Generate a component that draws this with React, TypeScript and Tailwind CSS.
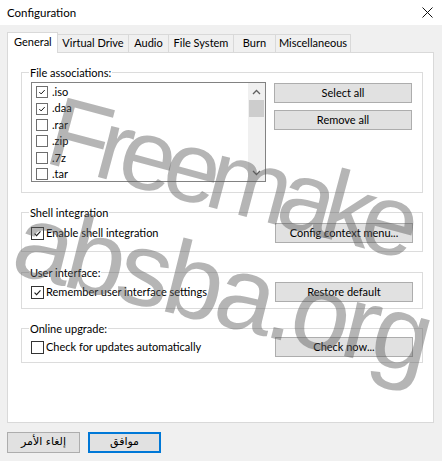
import { ReactNode } from "react";

const extensions = [
  { name: ".iso", checked: true },
  { name: ".daa", checked: true },
  { name: ".rar", checked: false },
  { name: ".zip", checked: false },
  { name: ".7z", checked: false },
  { name: ".tar", checked: false },
];

const tabs = [
  { name: "Virtual Drive", width: "w-[71px]" },
  { name: "Audio", width: "w-[40px]" },
  { name: "File System", width: "w-[65px]" },
  { name: "Burn", width: "w-[42px]" },
  { name: "Miscellaneous", width: "w-[75px]" },
];

function Check({ size }: { size: number }) {
  return (
    <svg width={size} height={size} viewBox="0 0 13 13" className="block">
      <path d="M3 6.6 L5.4 9 L10 4" fill="none" stroke="#1a1a1a" strokeWidth="1.3" />
    </svg>
  );
}

function ListCheckbox({ checked }: { checked: boolean }) {
  return (
    <span className="flex h-[12px] w-[12px] items-center justify-center border border-[#6e6e6e] bg-white">
      {checked ? <Check size={10} /> : null}
    </span>
  );
}

function Checkbox({ checked, label }: { checked: boolean; label: string }) {
  return (
    <label className="flex items-center gap-[2px]">
      <span className="flex h-[13px] w-[13px] items-center justify-center border border-[#333333] bg-white">
        {checked ? <Check size={11} /> : null}
      </span>
      <span>{label}</span>
    </label>
  );
}

function WinButton({ children }: { children: ReactNode }) {
  return (
    <button className="h-[20px] w-[138px] border border-[#adadad] bg-[#e1e1e1] text-center leading-[18px] text-black">
      {children}
    </button>
  );
}

function Group({ title, className, children }: { title: string; className: string; children: ReactNode }) {
  return (
    <fieldset className={`border border-[#dcdcdc] px-[9px] ${className}`}>
      <legend className="ml-[-2px] px-[1px] leading-[15px]">{title}</legend>
      {children}
    </fieldset>
  );
}

export default function App() {
  return (
    <div className="relative h-[461px] w-[442px] overflow-hidden bg-[#f0f0f0] text-[11px] text-black [font-family:Lato,'DejaVu_Sans',sans-serif]">
      <div className="flex h-[25px] items-center justify-between bg-white pl-[7px] pr-[9px]">
        <span className="text-[11.5px]">Configuration</span>
        <svg width="11" height="11" viewBox="0 0 11 11">
          <path d="M0.5 0.5 L10.5 10.5 M10.5 0.5 L0.5 10.5" stroke="#111" strokeWidth="1" />
        </svg>
      </div>

      <div className="px-[7px] pt-[7px]">
        <div className="flex h-[20px] items-end whitespace-nowrap">
          <div className="relative z-10 -mb-px flex h-[21px] w-[51px] items-center border border-b-0 border-[#d9d9d9] bg-white pb-px pl-[6px]">
            General
          </div>
          {tabs.map((tab) => (
            <div
              key={tab.name}
              className={`flex h-[18px] items-center justify-center border-t border-r border-[#d9d9d9] bg-[#f0f0f0] ${tab.width}`}
            >
              {tab.name}
            </div>
          ))}
        </div>

        <div className="h-[371px] w-[427px] border border-[#d9d9d9] bg-white pl-[13px] pr-[10px] pt-[12px]">
          <Group title="File associations:" className="pb-[10px] pt-[2px]">
            <div className="flex items-start">
              <div className="flex h-[100px] w-[235px] border border-[#828282]">
                <div className="flex flex-1 flex-col pl-[4px] pt-px">
                  {extensions.map((ext) => (
                    <div key={ext.name} className="flex h-[16.4px] items-center gap-[4px]">
                      <ListCheckbox checked={ext.checked} />
                      <span>{ext.name}</span>
                    </div>
                  ))}
                </div>
                <div className="flex w-[17px] flex-col bg-[#f0f0f0]">
                  <div className="flex h-[17px] items-center justify-center">
                    <svg width="9" height="6" viewBox="0 0 9 6">
                      <path d="M1 5 L4.5 1.5 L8 5" fill="none" stroke="#606060" strokeWidth="1.3" />
                    </svg>
                  </div>
                  <div className="mx-[1px] h-[17px] bg-[#cdcdcd]" />
                  <div className="flex-1" />
                  <div className="flex h-[17px] items-center justify-center">
                    <svg width="9" height="6" viewBox="0 0 9 6">
                      <path d="M1 1 L4.5 4.5 L8 1" fill="none" stroke="#606060" strokeWidth="1.3" />
                    </svg>
                  </div>
                </div>
              </div>
              <div className="ml-[8px] flex flex-col gap-[7px] pt-px">
                <WinButton>Select all</WinButton>
                <WinButton>Remove all</WinButton>
              </div>
            </div>
          </Group>

          <Group title="Shell integration" className="mt-[12px] pb-[8px] pt-[3px]">
            <div className="flex items-center justify-between">
              <Checkbox checked label="Enable shell integration" />
              <WinButton>Config context menu...</WinButton>
            </div>
          </Group>

          <Group title="User interface:" className="mt-[13px] pb-[6px] pt-[2px]">
            <div className="flex items-center justify-between">
              <Checkbox checked label="Remember user interface settings" />
              <WinButton>Restore default</WinButton>
            </div>
          </Group>

          <Group title="Online upgrade:" className="mt-[12px] pb-[5px] pt-px">
            <div className="flex items-center justify-between">
              <Checkbox checked={false} label="Check for updates automatically" />
              <WinButton>Check now...</WinButton>
            </div>
          </Group>
        </div>

        <div className="mt-[9px] flex gap-[8px]" dir="ltr">
          <button className="h-[21px] w-[73px] border border-[#adadad] bg-[#e1e1e1] text-[11px] [font-family:'DejaVu_Sans',sans-serif]">
            إلغاء الأمر
          </button>
          <button className="h-[21px] w-[73px] border-2 border-[#0078d7] bg-[#e1e1e1] text-[11px] [font-family:'DejaVu_Sans',sans-serif]">
            موافق
          </button>
        </div>
      </div>

      {/* watermark over the dialog */}
      <div className="pointer-events-none absolute left-[64px] top-[80px] origin-top-left rotate-[15deg] whitespace-nowrap text-[100px] leading-[100px] tracking-[-10px] text-[rgba(90,90,90,0.45)] [font-family:'Liberation_Sans',sans-serif]">
        Freemake
      </div>
      <div className="pointer-events-none absolute left-[30px] top-[186px] origin-top-left rotate-[14deg] whitespace-nowrap text-[105px] leading-[105px] tracking-[-5px] text-[rgba(90,90,90,0.45)] [font-family:'Liberation_Sans',sans-serif]">
        absba.org
      </div>
    </div>
  );
}
